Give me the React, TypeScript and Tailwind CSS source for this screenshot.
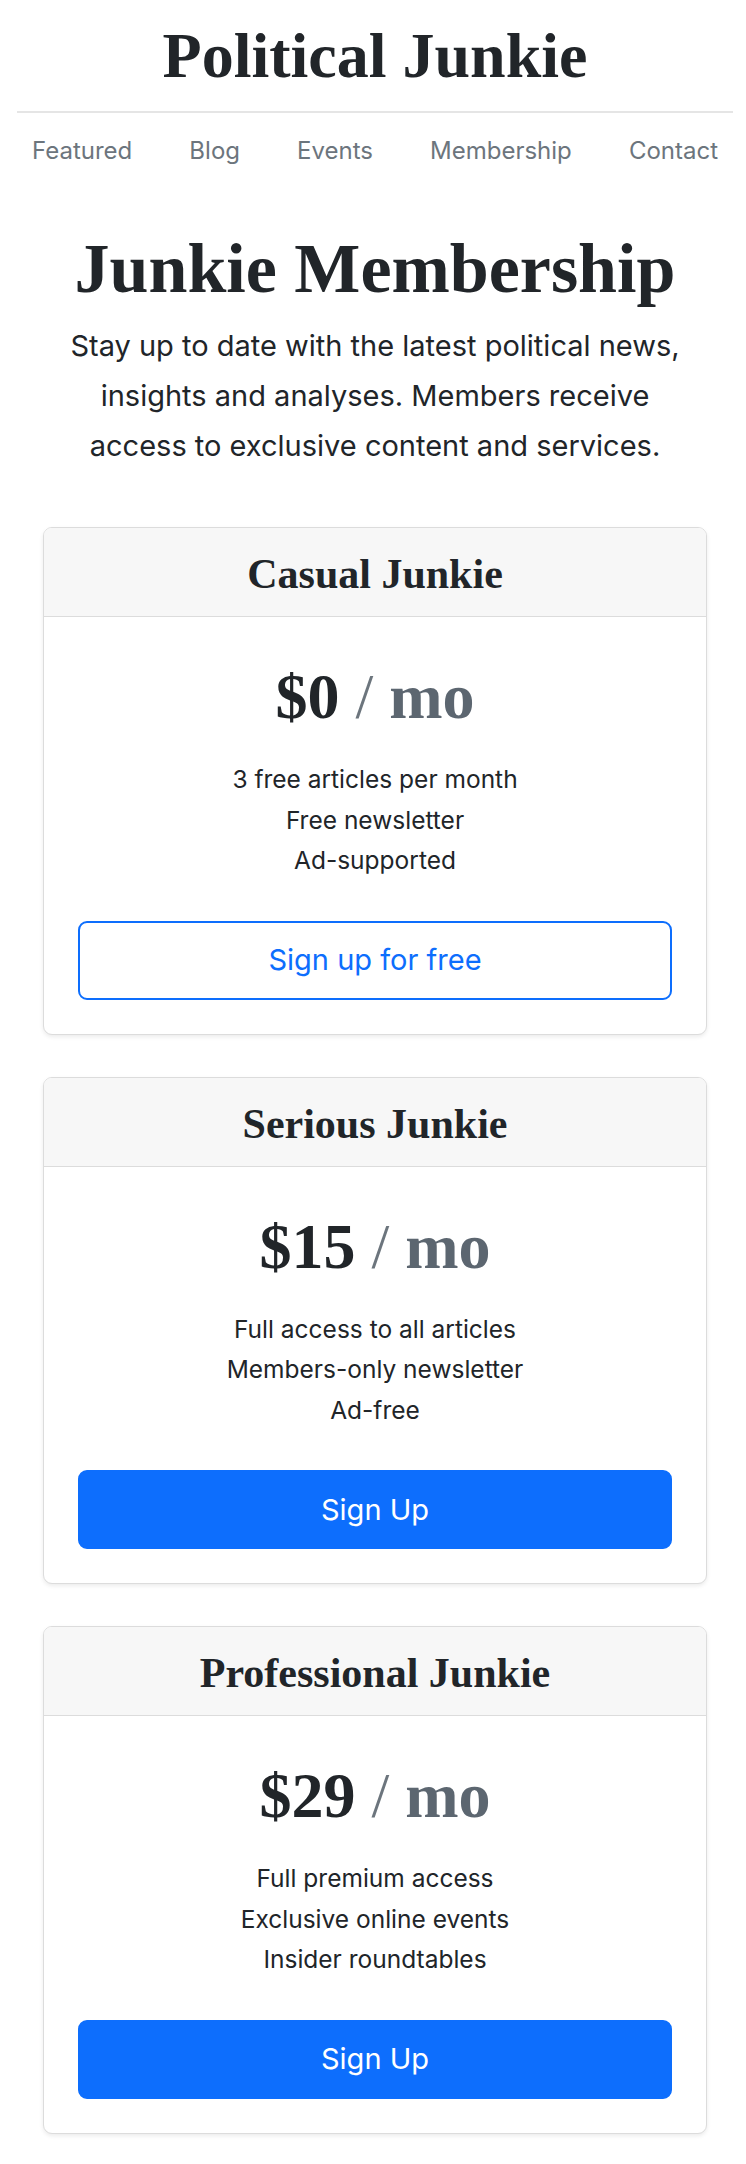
const navLinks = ["Featured", "Blog", "Events", "Membership", "Contact"];

const plans = [
  {
    name: "Casual Junkie",
    price: "$0",
    features: ["3 free articles per month", "Free newsletter", "Ad-supported"],
    cta: "Sign up for free",
    outline: true,
  },
  {
    name: "Serious Junkie",
    price: "$15",
    features: ["Full access to all articles", "Members-only newsletter", "Ad-free"],
    cta: "Sign Up",
    outline: false,
  },
  {
    name: "Professional Junkie",
    price: "$29",
    features: ["Full premium access", "Exclusive online events", "Insider roundtables"],
    cta: "Sign Up",
    outline: false,
  },
];

const serif = "font-['Liberation_Serif',Georgia,serif]";

export default function App() {
  return (
    <main className="min-h-screen bg-white pb-[33px] text-[#212529] font-['Inter','Liberation_Sans',sans-serif]">
      <div className="ml-[4px]">
        <header className="mx-[13px] border-b-2 border-[#e5e5e5] pt-[24px] pb-[23px]">
          <h1 className={`${serif} text-center text-[64px] font-bold leading-none text-[#212529]`}>
            Political Junkie
          </h1>
        </header>

        <nav className="mx-[13px] flex justify-between px-[15px] pt-[20px]">
          {navLinks.map((link) => (
            <a key={link} href="#" className="text-[24px] leading-[36px] text-[#6c757d]">
              {link}
            </a>
          ))}
        </nav>

        <section className="mt-[65px] text-center">
          <h2 className={`${serif} text-[70px] font-bold leading-none`}>Junkie Membership</h2>
          <p className="mt-[17px] text-[29px] leading-[50px]">
            Stay up to date with the latest political news,
            <br />
            insights and analyses. Members receive
            <br />
            access to exclusive content and services.
          </p>
        </section>

        <div className="mx-[39px] mt-[56px] flex flex-col gap-[42px]">
          {plans.map((plan) => (
            <div
              key={plan.name}
              className="overflow-hidden rounded-[9px] border border-[#dcdcdc] bg-white text-center shadow-[0_2px_4px_rgba(0,0,0,0.08)]"
            >
              <div className="h-[89px] border-b border-[#dcdcdc] bg-[#f7f7f7] pt-[25px]">
                <h3 className={`${serif} text-[42px] font-bold leading-none text-[#212529]`}>{plan.name}</h3>
              </div>
              <div className="px-[34px] pt-[48px] pb-[34px]">
                <p className={`${serif} text-[64px] font-bold leading-none`}>
                  {plan.price}
                  <span className="font-normal text-[#6c757d]"> / </span>
                  <span className="text-[#5c6670]">mo</span>
                </p>
                <ul className="mt-[30px] text-[24.5px] leading-[40.5px]">
                  {plan.features.map((f) => (
                    <li key={f}>{f}</li>
                  ))}
                </ul>
                <button
                  className={
                    plan.outline
                      ? "mt-[40px] h-[79px] w-full rounded-[9px] border-2 border-[#0d6efd] bg-white text-[29px] text-[#0d6efd]"
                      : "mt-[40px] h-[79px] w-full rounded-[9px] border-2 border-[#0d6efd] bg-[#0d6efd] text-[29px] text-white"
                  }
                >
                  {plan.cta}
                </button>
              </div>
            </div>
          ))}
        </div>
      </div>
    </main>
  );
}
